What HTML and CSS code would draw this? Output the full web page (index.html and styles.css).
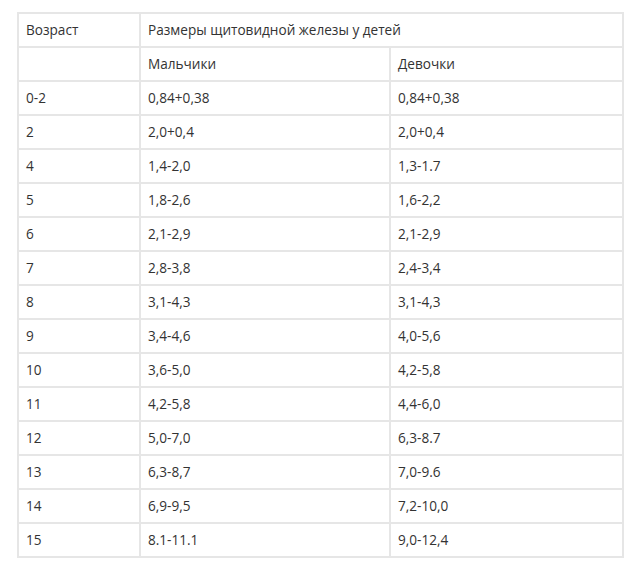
FILE: index.html
```html
<!DOCTYPE html>
<html lang="ru">
<head>
<meta charset="utf-8">
<link rel="stylesheet" href="styles.css">
</head>
<body>
<table class="sizes">
  <colgroup>
    <col class="c-age">
    <col class="c-boys">
    <col class="c-girls">
  </colgroup>
  <tr><td>Возраст</td><td colspan="2">Размеры щитовидной железы у детей</td></tr>
  <tr><td></td><td>Мальчики</td><td>Девочки</td></tr>
  <tr><td>0-2</td><td>0,84+0,38</td><td>0,84+0,38</td></tr>
  <tr><td>2</td><td>2,0+0,4</td><td>2,0+0,4</td></tr>
  <tr><td>4</td><td>1,4-2,0</td><td>1,3-1.7</td></tr>
  <tr><td>5</td><td>1,8-2,6</td><td>1,6-2,2</td></tr>
  <tr><td>6</td><td>2,1-2,9</td><td>2,1-2,9</td></tr>
  <tr><td>7</td><td>2,8-3,8</td><td>2,4-3,4</td></tr>
  <tr><td>8</td><td>3,1-4,3</td><td>3,1-4,3</td></tr>
  <tr><td>9</td><td>3,4-4,6</td><td>4,0-5,6</td></tr>
  <tr><td>10</td><td>3,6-5,0</td><td>4,2-5,8</td></tr>
  <tr><td>11</td><td>4,2-5,8</td><td>4,4-6,0</td></tr>
  <tr><td>12</td><td>5,0-7,0</td><td>6,3-8.7</td></tr>
  <tr><td>13</td><td>6,3-8,7</td><td>7,0-9.6</td></tr>
  <tr><td>14</td><td>6,9-9,5</td><td>7,2-10,0</td></tr>
  <tr><td>15</td><td>8.1-11.1</td><td>9,0-12,4</td></tr>
</table>
</body>
</html>
```
FILE: styles.css
```css
html, body {
  margin: 0;
  background: #fff;
}
body {
  padding: 12px 0 0 17px;
  font-family: "Open Sans", "Liberation Sans", sans-serif;
  font-size: 13.6px;
  color: #333;
}
.sizes {
  border-collapse: collapse;
  table-layout: fixed;
  width: 605px;
}
.c-age { width: 122px; }
.c-boys { width: 250px; }
.c-girls { width: 233px; }
.sizes td {
  border: 2px solid #e6e6e6;
  height: 32px;
  padding: 0 7px;
  vertical-align: middle;
  line-height: 20px;
}
```
